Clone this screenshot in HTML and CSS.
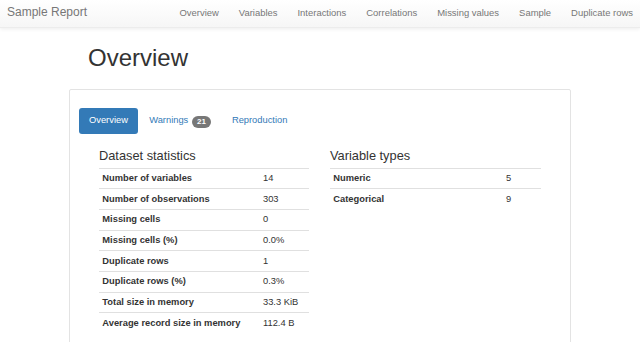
FILE: index.html
```html
<!DOCTYPE html>
<html>
<head>
<meta charset="utf-8">
<link rel="stylesheet" href="styles.css">
</head>
<body>
<header class="navbar">
  <a class="brand" href="#">Sample Report</a>
  <nav class="nav-links">
    <a href="#">Overview</a>
    <a href="#">Variables</a>
    <a href="#">Interactions</a>
    <a href="#">Correlations</a>
    <a href="#">Missing values</a>
    <a href="#">Sample</a>
    <a href="#">Duplicate rows</a>
  </nav>
</header>
<main class="container">
  <h1 class="page-title">Overview</h1>
  <section class="panel">
    <ul class="pills">
      <li><a class="pill active" href="#">Overview</a></li>
      <li><a class="pill" href="#">Warnings <span class="badge">21</span></a></li>
      <li><a class="pill" href="#">Reproduction</a></li>
    </ul>
    <div class="cols">
      <div class="col">
        <h4 class="col-title">Dataset statistics</h4>
        <table class="stats stats-ds">
          <tr><th>Number of variables</th><td>14</td></tr>
          <tr><th>Number of observations</th><td>303</td></tr>
          <tr><th>Missing cells</th><td>0</td></tr>
          <tr><th>Missing cells (%)</th><td>0.0%</td></tr>
          <tr><th>Duplicate rows</th><td>1</td></tr>
          <tr><th>Duplicate rows (%)</th><td>0.3%</td></tr>
          <tr><th>Total size in memory</th><td>33.3 KiB</td></tr>
          <tr><th>Average record size in memory</th><td>112.4 B</td></tr>
        </table>
      </div>
      <div class="col">
        <h4 class="col-title">Variable types</h4>
        <table class="stats stats-vt">
          <tr><th>Numeric</th><td>5</td></tr>
          <tr><th>Categorical</th><td>9</td></tr>
        </table>
      </div>
    </div>
  </section>
</main>
</body>
</html>
```
FILE: styles.css
```css
html, body {
  margin: 0;
  padding: 0;
  background: #fff;
  font-family: "Liberation Sans", Arial, Helvetica, sans-serif;
  color: #333;
  overflow: hidden;
}
a { text-decoration: none; }

.navbar {
  height: 28px;
  display: flex;
  align-items: flex-start;
  justify-content: space-between;
  padding: 0 7px 0 7px;
  background: linear-gradient(to bottom, #ffffff 0%, #f6f6f6 100%);
  box-shadow: 0 1px 4px rgba(0, 0, 0, 0.08);
  border-bottom: 1px solid #ececec;
  box-sizing: border-box;
}
.brand {
  font-size: 12px;
  line-height: 24px;
  color: #777;
}
.nav-links {
  display: flex;
  gap: 20px;
}
.nav-links a {
  font-size: 9.45px;
  line-height: 26px;
  color: #777;
}

.container {
  width: 502px;
  margin: 0 auto;
  padding-top: 17px;
}
.page-title {
  margin: 0 0 18px 19px;
  font-size: 24px;
  line-height: 26px;
  font-weight: 500;
  color: #333;
}
.panel {
  border: 1px solid #e3e3e3;
  border-radius: 2px;
  padding: 18px 9px 40px 9px;
  min-height: 300px;
}
.pills {
  list-style: none;
  margin: 0;
  padding: 0;
  display: flex;
  gap: 1.33px;
}
.pill {
  display: block;
  font-size: 9.33px;
  line-height: 13.33px;
  padding: 6.33px 10px;
  border-radius: 3px;
  color: #337ab7;
}
.pill.active {
  background: #337ab7;
  color: #fff;
}
.badge {
  display: inline-block;
  font-size: 8px;
  font-weight: bold;
  line-height: 8px;
  padding: 2px 4.67px;
  border-radius: 7px;
  background: #777;
  color: #fff;
  vertical-align: -1px;
  margin-left: 1.5px;
}
.cols {
  display: flex;
  gap: 20px;
  padding: 0 20px;
  margin-top: 14px;
}
.col {
  flex: 1 1 0;
}
.col-title {
  margin: 0 0 5px 0;
  font-size: 12.8px;
  line-height: 14px;
  font-weight: 500;
  color: #333;
}
.stats {
  width: 100%;
  border-collapse: collapse;
  font-size: 9.33px;
  color: #333;
}
.stats th, .stats td {
  text-align: left;
  border-top: 1px solid #e0e0e0;
  padding: 3.2px 3.33px;
  line-height: 13.3px;
  vertical-align: middle;
  white-space: nowrap;
}
.stats th { font-weight: bold; }
.stats-ds { width: 210px; }
.stats-ds th { width: 154px; }
.stats-vt { width: 211px; }
.stats-vt th { width: 166px; }
```
